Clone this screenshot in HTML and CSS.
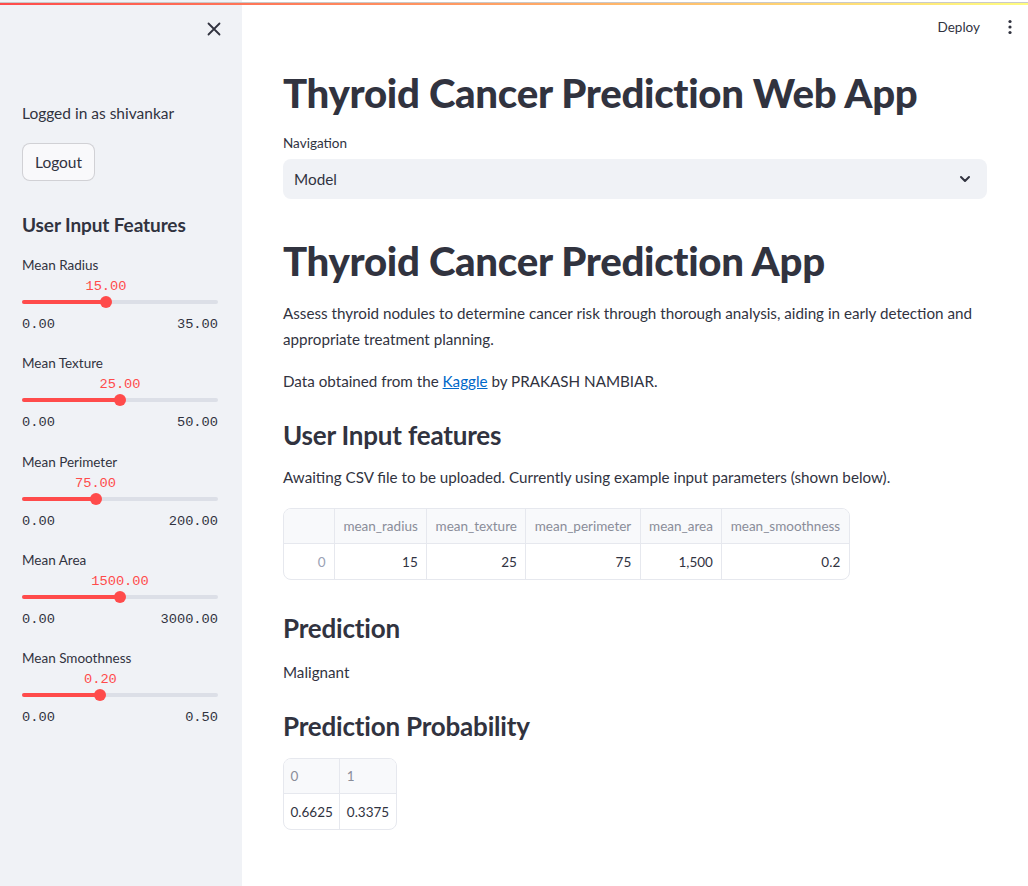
FILE: index.html
```html
<!DOCTYPE html>
<html lang="en">
<head>
<meta charset="utf-8">
<title>Thyroid Cancer Prediction Web App</title>
<link rel="stylesheet" href="styles.css">
</head>
<body>
<div class="decoration"></div>
<div class="app">
  <aside class="sidebar">
    <div class="sidebar-top">
      <svg class="close-icon" width="16" height="16" viewBox="0 0 16 16"><path d="M2.5 2.5 L13.5 13.5 M13.5 2.5 L2.5 13.5" stroke="#31333f" stroke-width="1.8" stroke-linecap="round"/></svg>
    </div>
    <p class="logged">Logged in as shivankar</p>
    <button class="btn">Logout</button>
    <h2 class="side-title">User Input Features</h2>

    <div class="slider">
      <div class="slider-label">Mean Radius</div>
      <div class="slider-value-row"><span class="slider-value" style="left:42.857%">15.00</span></div>
      <div class="slider-track"><div class="slider-fill" style="width:42.857%"></div><div class="slider-thumb" style="left:42.857%"></div></div>
      <div class="slider-ticks"><span>0.00</span><span>35.00</span></div>
    </div>

    <div class="slider">
      <div class="slider-label">Mean Texture</div>
      <div class="slider-value-row"><span class="slider-value" style="left:50%">25.00</span></div>
      <div class="slider-track"><div class="slider-fill" style="width:50%"></div><div class="slider-thumb" style="left:50%"></div></div>
      <div class="slider-ticks"><span>0.00</span><span>50.00</span></div>
    </div>

    <div class="slider">
      <div class="slider-label">Mean Perimeter</div>
      <div class="slider-value-row"><span class="slider-value" style="left:37.5%">75.00</span></div>
      <div class="slider-track"><div class="slider-fill" style="width:37.5%"></div><div class="slider-thumb" style="left:37.5%"></div></div>
      <div class="slider-ticks"><span>0.00</span><span>200.00</span></div>
    </div>

    <div class="slider">
      <div class="slider-label">Mean Area</div>
      <div class="slider-value-row"><span class="slider-value" style="left:50%">1500.00</span></div>
      <div class="slider-track"><div class="slider-fill" style="width:50%"></div><div class="slider-thumb" style="left:50%"></div></div>
      <div class="slider-ticks"><span>0.00</span><span>3000.00</span></div>
    </div>

    <div class="slider">
      <div class="slider-label">Mean Smoothness</div>
      <div class="slider-value-row"><span class="slider-value" style="left:40%">0.20</span></div>
      <div class="slider-track"><div class="slider-fill" style="width:40%"></div><div class="slider-thumb" style="left:40%"></div></div>
      <div class="slider-ticks"><span>0.00</span><span>0.50</span></div>
    </div>
  </aside>

  <main class="main">
    <header class="topbar">
      <span class="deploy">Deploy</span>
      <svg class="menu-icon" width="6" height="16" viewBox="0 0 6 16"><circle cx="3" cy="2.5" r="1.6" fill="#31333f"/><circle cx="3" cy="8" r="1.6" fill="#31333f"/><circle cx="3" cy="13.5" r="1.6" fill="#31333f"/></svg>
    </header>
    <div class="content">
      <h1 class="h1 first">Thyroid Cancer Prediction Web App</h1>
      <div class="field-label">Navigation</div>
      <div class="select">
        <span>Model</span>
        <svg width="14" height="14" viewBox="0 0 14 14"><path d="M3 5 L7 9 L11 5" fill="none" stroke="#31333f" stroke-width="2" stroke-linecap="round" stroke-linejoin="round"/></svg>
      </div>
      <h1 class="h1 second">Thyroid Cancer Prediction App</h1>
      <p class="para para1">Assess thyroid nodules to determine cancer risk through thorough analysis, aiding in early detection and appropriate treatment planning.</p>
      <p class="para para2">Data obtained from the <a href="#">Kaggle</a> by PRAKASH NAMBIAR.</p>
      <h3 class="h3 h3-features">User Input features</h3>
      <p class="para para3">Awaiting CSV file to be uploaded. Currently using example input parameters (shown below).</p>
      <table class="grid grid-input">
        <thead>
          <tr><th class="idx"></th><th>mean_radius</th><th>mean_texture</th><th>mean_perimeter</th><th>mean_area</th><th>mean_smoothness</th></tr>
        </thead>
        <tbody>
          <tr><td class="idx">0</td><td>15</td><td>25</td><td>75</td><td>1,500</td><td>0.2</td></tr>
        </tbody>
      </table>
      <h3 class="h3 h3-pred">Prediction</h3>
      <p class="para para4">Malignant</p>
      <h3 class="h3 h3-prob">Prediction Probability</h3>
      <table class="grid grid-prob">
        <thead>
          <tr><th>0</th><th>1</th></tr>
        </thead>
        <tbody>
          <tr><td>0.6625</td><td>0.3375</td></tr>
        </tbody>
      </table>
    </div>
  </main>
</div>
</body>
</html>
```

FILE: styles.css
```css
* { box-sizing: border-box; }
html, body { margin: 0; padding: 0; }
body {
  font-family: "Lato", "Open Sans", sans-serif;
  color: #31333f;
  background: #ffffff;
  width: 1028px;
  height: 886px;
  overflow: hidden;
}

.decoration {
  position: fixed;
  top: 2px;
  left: 0;
  right: 0;
  height: 3px;
  border-top: 1px solid #c9c9c9;
  background: linear-gradient(90deg, #ff4b4b, #fffd80);
  z-index: 10;
}

.app {
  display: flex;
  height: 886px;
}

/* Sidebar */
.sidebar {
  width: 242px;
  flex: 0 0 242px;
  background: #f0f2f6;
  padding: 0 24px 0 22px;
}
.sidebar-top {
  display: flex;
  justify-content: flex-end;
  padding-top: 21px;
  height: 100px;
  margin-right: -4px;
}
.close-icon { display: block; }
.logged {
  margin: 0;
  font-size: 15.5px;
  line-height: 26px;
}
.btn {
  margin-top: 17px;
  height: 38px;
  padding: 0 12px;
  font-family: inherit;
  font-size: 15.5px;
  color: #31333f;
  background: #f9f9fb;
  border: 1px solid rgba(49, 51, 63, 0.2);
  border-radius: 8px;
  display: block;
}
.side-title {
  margin: 32px 0 0;
  font-size: 19px;
  font-weight: 700;
  line-height: 24px;
  letter-spacing: -0.1px;
}

.slider {
  margin-top: 18px;
}
.slider + .slider { margin-top: 18.3px; }
.slider-label {
  font-size: 13.5px;
  line-height: 20px;
}
.slider-value-row {
  position: relative;
  height: 21px;
}
.slider-value {
  position: absolute;
  top: 3px;
  transform: translateX(-50%);
  font-family: "Liberation Mono", "DejaVu Sans Mono", monospace;
  font-size: 13.7px;
  line-height: 18px;
  color: #ff4b4b;
  white-space: nowrap;
}
.slider-track {
  position: relative;
  height: 4px;
  margin-top: 4px;
  background: #dcdfe7;
  border-radius: 2px;
}
.slider-fill {
  height: 4px;
  background: #ff4b4b;
  border-radius: 2px;
}
.slider-thumb {
  position: absolute;
  top: -4px;
  width: 12px;
  height: 12px;
  margin-left: -6px;
  border-radius: 50%;
  background: #ff4b4b;
}
.slider-ticks {
  display: flex;
  justify-content: space-between;
  margin-top: 11px;
  font-family: "Liberation Mono", "DejaVu Sans Mono", monospace;
  font-size: 13.7px;
  line-height: 20px;
  color: #31333f;
}

/* Main */
.main {
  flex: 1;
  display: flex;
  flex-direction: column;
}
.topbar {
  height: 56px;
  display: flex;
  align-items: center;
  justify-content: flex-end;
  padding-right: 15px;
  padding-bottom: 2px;
  gap: 27px;
}
.deploy {
  font-size: 13.5px;
  color: #31333f;
}
.content {
  width: 704px;
  margin: 0 auto;
  padding-top: 10px;
}
.h1 {
  margin: 0;
  font-size: 40.2px;
  font-weight: 900;
  line-height: 53px;
  letter-spacing: -0.3px;
}
.field-label {
  margin-top: 14px;
  font-size: 13.5px;
  line-height: 20px;
}
.select {
  margin-top: 6px;
  height: 40px;
  background: #f0f2f6;
  border-radius: 8px;
  display: flex;
  align-items: center;
  justify-content: space-between;
  padding: 0 15px 0 11px;
  font-size: 15.3px;
}
.select svg { display: block; }
.h1.second { margin-top: 35px; }
.para {
  margin: 0;
  font-size: 15.2px;
  line-height: 26px;
}
.para1 { margin-top: 13px; }
.para a { color: #0068c9; }
.para2 { margin-top: 16px; }
.h3 {
  margin: 0;
  font-size: 26px;
  font-weight: 700;
  line-height: 34px;
  letter-spacing: -0.2px;
}
.h3-features { margin-top: 24px; }
.para3 { margin-top: 12px; }
.h3-pred { margin-top: 31px; }
.para4 { margin-top: 14px; }
.h3-prob { margin-top: 24px; }

.grid {
  margin-top: 18px;
  border-collapse: separate;
  border-spacing: 0;
  border: 1px solid #e6e8ee;
  border-radius: 8px;
  font-size: 13.5px;
  overflow: hidden;
}
.grid th, .grid td {
  height: 35px;
  padding: 0 8.4px;
  border-right: 1px solid #e6e8ee;
  white-space: nowrap;
}
.grid th:last-child, .grid td:last-child { border-right: none; }
.grid th {
  background: #f8f9fb;
  color: #8a8d99;
  font-weight: 400;
  text-align: left;
  border-bottom: 1px solid #e6e8ee;
}
.grid td {
  text-align: right;
  color: #31333f;
}
.grid td.idx { color: #9aa1b5; }
.grid-input .idx { width: 51px; }
.grid-prob { margin-top: 15px; }
.grid-prob td { text-align: left; }
.grid-prob th, .grid-prob td { padding: 0 6.5px; }
```
